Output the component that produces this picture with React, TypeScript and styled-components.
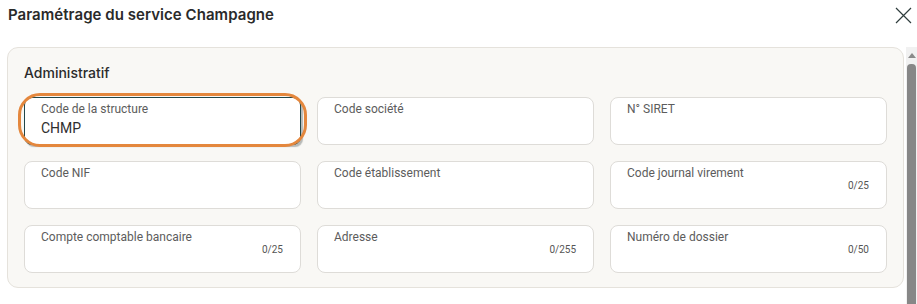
import React from 'react';
import styled, {createGlobalStyle} from 'styled-components';

const GlobalStyle = createGlobalStyle`
  html, body {
    margin: 0;
    padding: 0;
    background: #ffffff;
    overflow: hidden;
  }
  body {
    font-family: Roboto, "Liberation Sans", sans-serif;
  }
`

type FieldDef = {
    label: string;
    value?: string;
    counter?: string;
    focused?: boolean;
}

const fields: FieldDef[] = [
    {label: 'Code de la structure', value: 'CHMP', focused: true},
    {label: 'Code société'},
    {label: 'N° SIRET'},
    {label: 'Code NIF'},
    {label: 'Code établissement'},
    {label: 'Code journal virement', counter: '0/25'},
    {label: 'Compte comptable bancaire', counter: '0/25'},
    {label: 'Adresse', counter: '0/255'},
    {label: 'Numéro de dossier', counter: '0/50'},
]

export default function App() {
    return (
        <>
            <GlobalStyle/>
            <Dialog>
                <Header>
                    <Title>Paramétrage du service Champagne</Title>
                    <CloseButton aria-label="Fermer">
                        <svg width="17" height="17" viewBox="0 0 17 17">
                            <path d="M1 1 L16 16 M16 1 L1 16" stroke="#2f3d3d" strokeWidth="1.2" fill="none"/>
                        </svg>
                    </CloseButton>
                </Header>
                <Body>
                    <Panel>
                        <SectionTitle>Administratif</SectionTitle>
                        <Grid>
                            {fields.map((f) => (
                                <FieldWrap key={f.label}>
                                    <Field $focused={f.focused}>
                                        <Label>{f.label}</Label>
                                        {f.value && <Value>{f.value}</Value>}
                                        {f.counter && <Counter>{f.counter}</Counter>}
                                    </Field>
                                    {f.focused && <Highlight/>}
                                </FieldWrap>
                            ))}
                        </Grid>
                    </Panel>
                    <Scrollbar>
                        <ScrollArrow/>
                        <ScrollThumb/>
                    </Scrollbar>
                </Body>
            </Dialog>
        </>
    )
}

const Dialog = styled.div`
  width: 917px;
  height: 304px;
  display: flex;
  flex-direction: column;
  background: #ffffff;
`

const Header = styled.div`
  height: 47px;
  display: flex;
  align-items: flex-start;
  justify-content: space-between;
  padding: 0 5px 0 8px;
  box-sizing: border-box;
`

const Title = styled.h1`
  margin: 5px 0 0;
  font-family: Inter, "Noto Sans", sans-serif;
  font-size: 15px;
  line-height: 20px;
  font-weight: 600;
  color: #2a2a2a;
  letter-spacing: 0.05px;
`

const CloseButton = styled.button`
  all: unset;
  margin-top: 7px;
  width: 17px;
  height: 17px;
  display: flex;
  cursor: pointer;
`

const Body = styled.div`
  flex: 1;
  display: flex;
  align-items: flex-start;
  padding-left: 7px;
  gap: 2px;
  min-height: 0;
`

const Panel = styled.section`
  flex: 1;
  height: 241px;
  box-sizing: border-box;
  background: #f9f8f5;
  border: 1px solid #e5e2dc;
  border-radius: 11px;
  padding: 15px 16px 15px 16px;
`

const SectionTitle = styled.h2`
  margin: 0 0 14px;
  font-family: Inter, "Noto Sans", sans-serif;
  font-size: 14px;
  line-height: 20px;
  font-weight: 500;
  color: #2b2b2b;
`

const Grid = styled.div`
  display: grid;
  grid-template-columns: repeat(3, 1fr);
  grid-auto-rows: 48px;
  gap: 16px;
`

const FieldWrap = styled.div`
  position: relative;
`

const Field = styled.div<{ $focused?: boolean }>`
  height: 100%;
  box-sizing: border-box;
  background: #ffffff;
  border: 1px solid ${p => p.$focused ? '#21474a' : '#dedcd8'};
  border-radius: 8px;
  padding: 3px 16px 0 16px;
  box-shadow: ${p => p.$focused ? '2px 2px 1px rgba(60, 70, 70, 0.35)' : 'none'};
  display: flex;
  flex-direction: column;
`

const Label = styled.span`
  font-size: 12px;
  line-height: 16px;
  color: #5c5c5c;
`

const Value = styled.span`
  margin-top: 1px;
  font-size: 14px;
  line-height: 20px;
  color: #2e2e2e;
`

const Counter = styled.span`
  align-self: flex-end;
  margin: -1px 1px 0 0;
  font-size: 10px;
  line-height: 12px;
  color: #555555;
`

const Highlight = styled.div`
  position: absolute;
  left: -6px;
  right: -6px;
  top: -4px;
  bottom: -2px;
  border: 3px solid #e4873d;
  border-radius: 22px;
  pointer-events: none;
`

const Scrollbar = styled.div`
  width: 11px;
  align-self: stretch;
  background: #f1f1f1;
  display: flex;
  flex-direction: column;
  align-items: center;
`

const ScrollArrow = styled.div`
  margin-top: 6px;
  width: 0;
  height: 0;
  border-left: 4px solid transparent;
  border-right: 4px solid transparent;
  border-bottom: 5px solid #8a8a8a;
`

const ScrollThumb = styled.div`
  margin-top: 6px;
  width: 9px;
  flex: 1;
  background: #878787;
  border-radius: 4px 4px 0 0;
`
